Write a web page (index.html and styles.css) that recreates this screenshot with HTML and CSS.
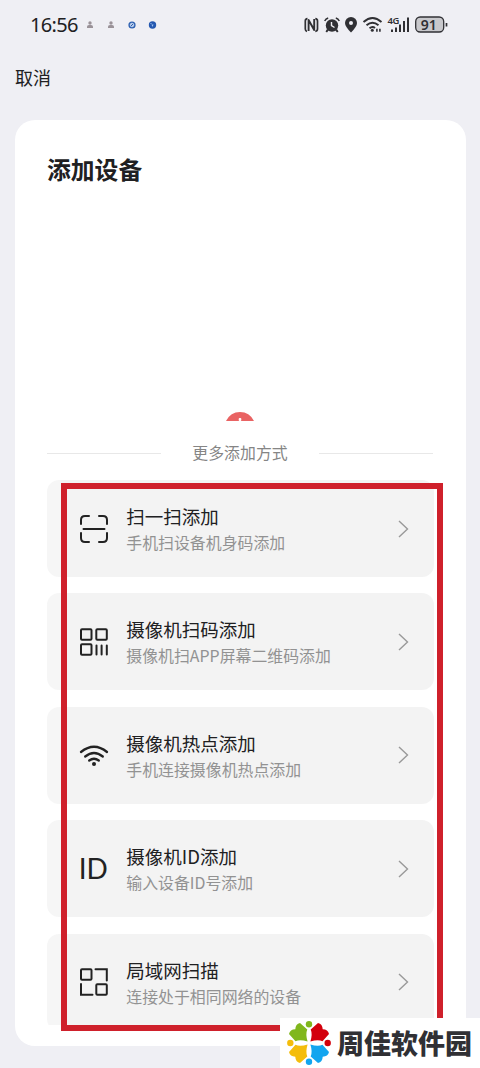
FILE: index.html
```html
<!DOCTYPE html>
<html lang="zh-CN">
<head>
<meta charset="utf-8">
<title>添加设备</title>
<link rel="stylesheet" href="styles.css">
</head>
<body>
<div class="screen">
  <header class="status">
    <span class="clock">16:56</span>
    <svg class="notices" width="72" height="12" viewBox="0 0 72 12">
      <g fill="#9a9298"><circle cx="4" cy="4" r="1.7"/><path d="M1 9V7.5Q1 6 3 6H5Q7 6 7 7.5V9Z"/><circle cx="25" cy="4" r="1.7"/><path d="M22 9V7.5Q22 6 24 6H26Q28 6 28 7.5V9Z"/></g>
      <circle cx="46" cy="6" r="3.6" fill="#2c5fb0"/><circle cx="46" cy="6" r="1.8" fill="none" stroke="#d8e6fa" stroke-width=".9"/><path d="M45 5l2 2" stroke="#fff" stroke-width=".7"/>
      <circle cx="66.500" cy="6" r="3.700" fill="#2458b0"/><path d="M65.500 5.500h2l-1 2.500z" fill="#a9c8f4"/><circle cx="65" cy="4.500" r=".6" fill="#a9c8f4"/>
    </svg>
    <svg class="signals" width="146" height="20" viewBox="302 15 146 20" fill="none" stroke="#303034">
      <path d="M307.500 18.700Q305.300 18.900 305.300 21V29Q305.300 31 307 31.500M315.300 18.700Q317.500 18.900 317.500 21V29Q317.500 31 315.300 31.300" stroke-width="1.700"/><path d="M308.600 31V20L314.200 30V19" stroke-width="1.900" stroke-linejoin="round"/>
      <g stroke="none" fill="#303034"><circle cx="332" cy="25.500" r="6.200"/><path d="M327 29l2 1-2 2.500-1.500-1zM337 29l-2 1 2 2.500 1.500-1z"/></g>
      <path d="M324.700 21Q325.700 18.700 328.200 18M339.300 21Q338.300 18.700 335.800 18" stroke-width="1.500"/><path d="M331.500 22V25.700L334.500 27.500" stroke="#efeff4" stroke-width="1.400"/>
      <path d="M351 32.500Q345 26.500 345 23A6 6 0 0 1 357 23Q357 26.500 351 32.500Z" fill="#303034" stroke="none"/><circle cx="351" cy="23" r="2" fill="#efeff4" stroke="none"/>
      <path d="M363.500 22Q372.500 14 381.500 22M366.500 25.300Q372.500 20 378.500 25.300M369.500 28.200Q372.500 25.700 375 28" stroke-width="1.900"/><circle cx="372.300" cy="30.300" r="1.500" fill="#303034" stroke="none"/><path d="M376.900 28.700v3M379.900 28.700v3" stroke-width="1.600"/>
      <path d="M392 29.500V32M396 27.500V32M400 24.500V32M404 21V32M408 17.500V32" stroke-width="2"/>
      <text x="387.500" y="24" class="network">4G</text>
      <rect x="415.700" y="17" width="28" height="15" rx="4.500" fill="#c8c8cc" stroke-width="1.300"/><path d="M446.500 23v3.500" stroke-width="1.700"/>
      <text x="420.700" y="29.700" class="battery">91</text>
    </svg>
  </header>
  <nav class="nav">取消</nav>
  <main class="card">
    <h1 class="heading">添加设备</h1>
    <div class="preview">
      <svg width="28" height="9" viewBox="0 0 28 9"><path d="M0 9Q4.500 0 14 0T28 9Z" fill="#e96363"/><rect x="12.700" y="6" width="2.600" height="3" rx="1" fill="#fff"/></svg>
    </div>
    <div class="divider"><span class="divider-label">更多添加方式</span></div>
    <div class="methods">
      <div class="method">
        <svg class="icon" viewBox="0 0 28 28"><path d="M1 9V5Q1 1 5 1H9M19 1H23Q27 1 27 5V9M1 18V23Q1 27 5 27H9M19 27H23Q27 27 27 23V18M3.500 14H24.500"/></svg>
        <div class="copy"><div class="name">扫一扫添加</div><div class="hint">手机扫设备机身码添加</div></div>
        <svg class="arrow" viewBox="0 0 11 18"><path d="M1 1l8.500 8L1 17"/></svg>
      </div>
      <div class="method">
        <svg class="icon" viewBox="0 0 28 28"><rect x="1" y="1.300" width="10.500" height="10.500" rx="1"/><rect x="16.300" y="1.300" width="10.500" height="10.500" rx="1"/><rect x="1" y="16.300" width="10.500" height="10.500" rx="1"/><path d="M16.500 17.500V26.500M21.600 17.500V26.500M26.800 17.500V26.500"/></svg>
        <div class="copy"><div class="name">摄像机扫码添加</div><div class="hint">摄像机扫APP屏幕二维码添加</div></div>
        <svg class="arrow" viewBox="0 0 11 18"><path d="M1 1l8.500 8L1 17"/></svg>
      </div>
      <div class="method">
        <svg class="icon wave" viewBox="0 0 28 28"><path d="M1 11Q14 .5 27 11M5.200 15.500Q14 8.500 22.800 15.500M9.200 19.500Q14 16 18.800 19.500"/><circle cx="14" cy="23" r="2"/></svg>
        <div class="copy"><div class="name">摄像机热点添加</div><div class="hint">手机连接摄像机热点添加</div></div>
        <svg class="arrow" viewBox="0 0 11 18"><path d="M1 1l8.500 8L1 17"/></svg>
      </div>
      <div class="method">
        <svg class="icon" viewBox="0 0 28 28"><text class="id-mark" x="-1.300" y="24">ID</text></svg>
        <div class="copy"><div class="name">摄像机ID添加</div><div class="hint">输入设备ID号添加</div></div>
        <svg class="arrow" viewBox="0 0 11 18"><path d="M1 1l8.500 8L1 17"/></svg>
      </div>
      <div class="method">
        <svg class="icon" viewBox="0 0 28 28"><rect x="1" y="1.300" width="10.500" height="10.500" rx="1"/><rect x="16.300" y="16.300" width="10.500" height="10.500" rx="1"/><path d="M15.500 1.300H26.800V12.500M1 16V26.800H12.500"/></svg>
        <div class="copy"><div class="name">局域网扫描</div><div class="hint">连接处于相同网络的设备</div></div>
        <svg class="arrow" viewBox="0 0 11 18"><path d="M1 1l8.500 8L1 17"/></svg>
      </div>
    </div>
  </main>
  <div class="highlight"></div>
  <div class="brand">
    <svg class="brand-logo" viewBox="0 0 44 44">
      <defs><g id="petal"><circle cx="22" cy="3.300" r="3.200"/><path d="M13 2L20.300 8.500Q18.300 13 20.600 20.600Q13 18.300 8.500 20.300L2 13Q3 8.500 8.300 8.300Q8.500 3 13 2Z"/></g></defs>
      <use href="#petal" fill="#80b71c"/>
      <use href="#petal" fill="#d3000c" transform="rotate(90 22 22)"/>
      <use href="#petal" fill="#13a5ef" transform="rotate(180 22 22)"/>
      <use href="#petal" fill="#f4bd0b" transform="rotate(270 22 22)"/>
    </svg>
    <span class="brand-name">周佳软件园</span>
  </div>
</div>
</body>
</html>
```
FILE: styles.css
```css
* { box-sizing: border-box; }
body { margin: 0; background: #efeff4; color: #202022; font-family: "Noto Sans CJK SC", sans-serif; }
.screen { position: relative; width: 480px; height: 1068px; overflow: hidden; }
.status { display: flex; align-items: center; height: 50px; padding-left: 30px; }
.clock { width: 56px; font: 20px/24px "Noto Sans", sans-serif; letter-spacing: -.7px; white-space: nowrap; }
.notices { flex: none; }
.signals { flex: none; margin-left: 144px; }
.network { fill: #303034; stroke: none; font: 600 9.5px "Noto Sans", sans-serif; letter-spacing: -.5px; }
.battery { fill: #303034; stroke: none; font: 600 14px "Noto Sans", sans-serif; }
.nav { height: 70px; padding: 14px 15px; font-size: 18px; line-height: 27px; }
.card { width: 451px; height: 926px; margin-left: 15px; padding: 31px 32px 0; background: #fff; border-radius: 20px; }
.heading { margin: 0; font-size: 23.800px; line-height: 36px; font-weight: 700; }
.preview { display: flex; justify-content: center; align-items: flex-end; height: 234px; padding-right: 2px; }
.preview svg { display: block; }
.divider { display: flex; align-items: center; gap: 31px; height: 64px; width: 386px; color: #858585; }
.divider::before, .divider::after { content: ""; flex: 1; height: 1px; background: #e8e8e8; }
.divider-label { font-size: 15.900px; line-height: 24px; }
.methods { display: flex; flex-direction: column; gap: 16.400px; height: 545px; margin-top: -5px; overflow: hidden; }
.method { display: flex; flex: none; align-items: center; width: 387px; height: 97px; padding: 0 25px 0 33px; border-radius: 12px; background: linear-gradient(90deg, #f6f6f6 14px, #f3f3f3 14px); }
.icon { flex: none; width: 28px; height: 28px; overflow: visible; fill: none; stroke: #222; stroke-width: 2; stroke-linecap: round; }
.wave { stroke-width: 2.300; }
.wave circle { fill: #222; stroke: none; }
.id-mark { fill: #222; stroke: none; font: 28px Lato, sans-serif; }
.copy { flex: 1; margin-left: 18.300px; padding-top: 1px; white-space: nowrap; }
.name { font-size: 18.500px; line-height: 27px; }
.hint { color: #929292; font-size: 15.900px; line-height: 25px; }
.arrow { flex: none; width: 11px; height: 18px; fill: none; stroke: #999; stroke-width: 1.400; }
.highlight { position: absolute; left: 61px; top: 483px; width: 382px; height: 548px; border: 6px solid #cf202b; }
.brand { position: absolute; right: 0; bottom: 0; display: flex; align-items: center; width: 200px; height: 50px; padding-left: 7px; background: #fff; }
.brand-logo { flex: none; width: 44px; height: 44px; }
.brand-name { margin: 0 0 0 6px; color: #303034; font-size: 27px; line-height: 40px; font-weight: 900; white-space: nowrap; }
```
